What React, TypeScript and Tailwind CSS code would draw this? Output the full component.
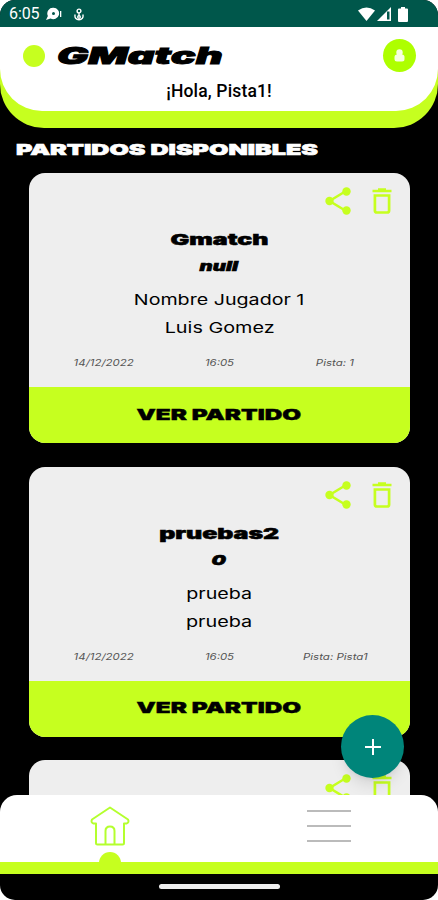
import React from 'react';

// Type definition for match
type MatchType = {
  id: number;
  name: string;
  level: string;
  field: string;
  player: string;
  date: string;
  time: string;
  court: string;
};

const matches: MatchType[] = [
  { id: 1, name: 'Gmatch', level: 'null', field: 'Nombre Jugador 1', player: 'Luis Gomez', date: '14/12/2022', time: '16:05', court: 'Pista: 1' },
  { id: 2, name: 'pruebas2', level: '0', field: 'prueba', player: 'prueba', date: '14/12/2022', time: '16:05', court: 'Pista: Pista1' },
];

// Inter stretched horizontally, used for every wide label
const Wide: React.FC<{ className: string; children: React.ReactNode }> = ({ className, children }) => (
  <span className={`inline-block whitespace-nowrap ${className}`}>{children}</span>
);

const StatusBar: React.FC = () => (
  <div className="flex h-[27px] shrink-0 items-center bg-[#00574b] pl-[9px] pr-[30px] pt-[1px] text-white">
    <span className="font-['Roboto',sans-serif] text-[16px] leading-none tracking-[-0.1px]">6:05</span>
    <svg className="ml-[7px]" width="16" height="14" viewBox="0 0 16 14" fill="currentColor">
      <path fillRule="evenodd" d="M7.500 0.800a5.700 5.700 0 1 1-3 10.600L0 13l1.900-4A5.700 5.700 0 0 1 7.500 0.800Zm0 4.200a1.500 1.500 0 1 0 0 3A1.500 1.500 0 0 0 7.500 5Z" />
      <path d="M14 4h1.300v6H14z" />
    </svg>
    <svg className="ml-[12px]" width="10" height="13" viewBox="0 0 10 13" fill="none" stroke="currentColor" strokeWidth="1.400">
      <circle cx="5" cy="3" r="1.900" />
      <path d="M5 5v3M1.200 6.500c-1 3 1 5.300 3.800 5.300s4.800-2.300 3.800-5.300" />
      <circle cx="5" cy="9" r="1.300" />
    </svg>
    <div className="ml-auto flex items-center">
      <svg width="17" height="14" viewBox="0 0 17 14" fill="currentColor">
        <path d="M0 3.500Q8.500-2.500 17 3.500L8.500 14Z" />
      </svg>
      <svg className="ml-[2px]" width="14" height="14" viewBox="0 0 14 14" fill="currentColor">
        <path d="M0 14 14 0v14Z" />
        <path d="M10 4.500h2.500v8H10z" fill="#00574b" />
      </svg>
      <svg className="ml-[7px]" width="10" height="15" viewBox="0 0 10 15" fill="currentColor">
        <path d="M3 0h4v1.500h2a1 1 0 0 1 1 1V14a1 1 0 0 1-1 1H1a1 1 0 0 1-1-1V2.500a1 1 0 0 1 1-1h2Z" />
      </svg>
    </div>
  </div>
);

const Header: React.FC = () => (
  <div className="shrink-0 bg-black">
    <header className="h-[101px] rounded-b-[44px] bg-[#c6ff1f]">
      <div className="h-[84px] rounded-b-[42px] bg-white pt-3">
        <div className="flex h-[33px] items-center pl-[23px] pr-[22px]">
          <span className="size-[22px] rounded-full bg-[#c6ff1f]" />
          <Wide className="mt-[2px] ml-[12px] origin-left scale-x-[1.8] text-[23px] leading-none font-black italic [-webkit-text-stroke:0.9px_currentColor]">GMatch</Wide>
          <span className="ml-auto flex size-[33px] items-center justify-center rounded-full bg-[#aeff00]">
            <svg width="11" height="13" viewBox="0 0 11 13" fill="#f6ffe0">
              <circle cx="5.500" cy="3.500" r="3.200" />
              <rect x="0.500" y="5.500" width="10" height="7" rx="2.500" />
            </svg>
          </span>
        </div>
        <p className="mt-[9px] text-center font-['Roboto',sans-serif] text-[17.5px] leading-[20px] font-medium tracking-[0.15px]">¡Hola, Pista1!</p>
      </div>
    </header>
  </div>
);

const ShareIcon: React.FC = () => (
  <svg width="26" height="28" viewBox="0 0 26 28" fill="#c6ff1f" stroke="#c6ff1f">
    <path d="M21 4 4.500 14 21 24" fill="none" strokeWidth="2.500" />
    <circle cx="21.500" cy="4.500" r="4.200" stroke="none" />
    <circle cx="4.500" cy="14" r="4.200" stroke="none" />
    <circle cx="21.500" cy="23.500" r="4.200" stroke="none" />
  </svg>
);

const TrashIcon: React.FC = () => (
  <svg width="20" height="26" viewBox="0 0 20 26" fill="none" stroke="#c6ff1f" strokeWidth="2.700">
    <path d="M0.500 3h19M6 1.500h8" />
    <path d="M2.900 7.500h14.200v15a2 2 0 0 1-2 2H4.900a2 2 0 0 1-2-2Z" />
  </svg>
);

const CardActions: React.FC = () => (
  <div className="flex h-[54px] items-center justify-end gap-[21px] pt-[2px] pr-[18px]">
    <ShareIcon />
    <TrashIcon />
  </div>
);

const MatchCard: React.FC<{ match: MatchType }> = ({ match }) => (
  <article className="flex h-[270px] shrink-0 flex-col overflow-hidden rounded-[16px] bg-[#eee]">
    <CardActions />
    <div className="flex flex-col items-center">
      <Wide className="h-[27px] scale-x-[1.66] text-[15px] leading-[26px] font-black [-webkit-text-stroke:0.5px_currentColor]">{match.name}</Wide>
      <Wide className="h-[27px] scale-x-[1.5] text-[13.5px] leading-[25px] font-black italic [-webkit-text-stroke:0.6px_currentColor]">{match.level}</Wide>
      <Wide className="mt-[5px] h-[28px] scale-x-[1.31] text-[15px] leading-[28px]">{match.field}</Wide>
      <Wide className="h-[28px] scale-x-[1.32] text-[15px] leading-[28px]">{match.player}</Wide>
    </div>
    <div className="mt-[11px] flex px-[17px] text-[9px] leading-[20px] text-[#555] italic">
      <span className="flex-1 text-center"><Wide className="scale-x-[1.27]">{match.date}</Wide></span>
      <span className="flex-1 text-center"><Wide className="scale-x-[1.27]">{match.time}</Wide></span>
      <span className="flex-1 text-center"><Wide className="scale-x-[1.28]">{match.court}</Wide></span>
    </div>
    <button className="mt-auto h-[56px] w-full bg-[#c6ff1f] pb-[3px]">
      <Wide className="scale-x-[1.62] text-[15px] leading-none font-black [-webkit-text-stroke:0.4px_currentColor]">VER PARTIDO</Wide>
    </button>
  </article>
);

const BottomNav: React.FC = () => (
  <nav className="shrink-0">
    <div className="flex h-[67px] rounded-t-[17px] bg-white">
      <div className="relative flex w-1/2 justify-center pt-[11px]">
        <svg width="40" height="41" viewBox="0 0 40 41" fill="none" stroke="#b4ff2e" strokeWidth="2" strokeLinejoin="round" strokeLinecap="round">
          <path d="M20 1.500 38 13.500q1.500 3-1.500 4H34v19.500q0 1.500-1.500 1.500h-25Q6 38.500 6 37V17.500H3.500q-3-1-1.500-4Z" />
          <path d="M15.500 38V25q0-4.500 4.500-4.500t4.500 4.500v13" />
        </svg>
        <span className="absolute -bottom-3 size-[22px] rounded-full bg-[#c6ff1f]" />
      </div>
      <div className="flex w-1/2 flex-col items-center gap-[13px] pt-[15px]">
        <span className="h-[2px] w-[44px] bg-[#bbb]" />
        <span className="h-[2px] w-[44px] bg-[#bbb]" />
        <span className="h-[2px] w-[44px] bg-[#bbb]" />
      </div>
    </div>
    <div className="h-[12px] bg-[#c6ff1f]" />
    <div className="flex h-[26px] justify-center pt-[10px]">
      <span className="h-[5px] w-[121px] rounded-full bg-[#eee]" />
    </div>
  </nav>
);

const App: React.FC = () => {
  return (
    <div className="h-[900px] w-[438px] bg-white">
      <div className="relative flex h-full flex-col overflow-hidden rounded-[15px] bg-black font-['Inter',sans-serif] text-black">
        <StatusBar />
        <Header />
        <main className="flex min-h-0 flex-1 flex-col overflow-hidden">
          <h1 className="h-[45px] shrink-0 pt-[11px] pl-[16px] leading-[20px] text-white">
            <Wide className="origin-left scale-x-[1.67] text-[15px] font-black [-webkit-text-stroke:0.6px_currentColor]">PARTIDOS DISPONIBLES</Wide>
          </h1>
          <div className="flex min-h-0 flex-1 flex-col gap-[23.500px] pr-[28px] pl-[28.500px]">
            {matches.map(match => (
              <MatchCard key={match.id} match={match} />
            ))}
            <article className="min-h-0 flex-1 overflow-hidden rounded-t-[16px] bg-[#eee]">
              <CardActions />
            </article>
          </div>
        </main>
        <BottomNav />
        <button className="absolute top-[715px] left-[341px] flex size-[63px] items-center justify-center rounded-full bg-[#00857a] shadow-lg">
          <svg width="16" height="16" viewBox="0 0 16 16" stroke="white" strokeWidth="2">
            <path d="M8 0v16M0 8h16" />
          </svg>
        </button>
      </div>
    </div>
  );
};

export default App;
